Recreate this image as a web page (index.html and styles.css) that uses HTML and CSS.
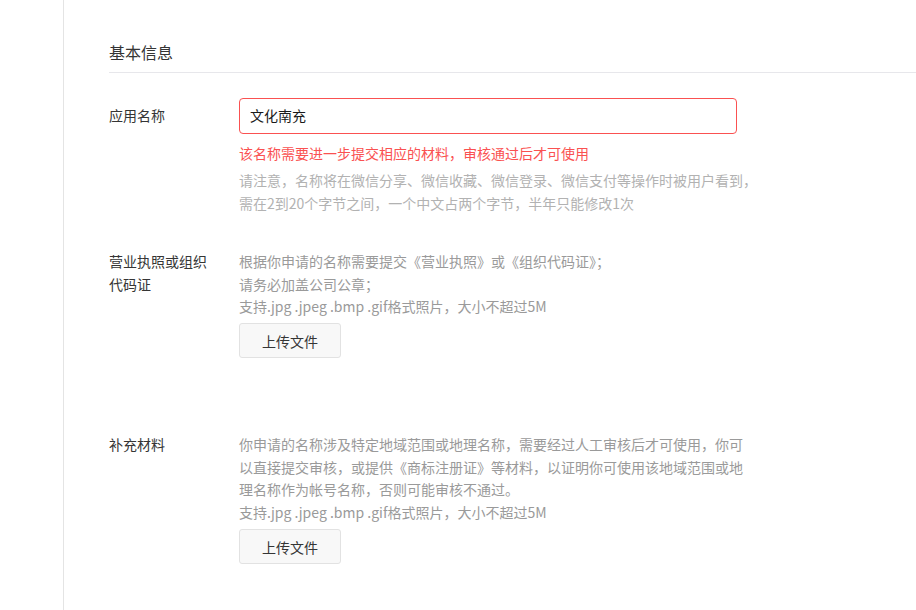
FILE: index.html
```html
<!DOCTYPE html>
<html lang="zh-CN">
<head>
<meta charset="utf-8">
<title>基本信息</title>
<link rel="stylesheet" href="styles.css">
</head>
<body>
<div class="page">
  <aside class="sidebar"></aside>
  <main class="main">
    <h2 class="section-title">基本信息</h2>

    <div class="form-row row-name">
      <label class="form-label label-input">应用名称</label>
      <div class="form-control">
        <div class="input-box">文化南充</div>
        <p class="error-msg">该名称需要进一步提交相应的材料，审核通过后才可使用</p>
        <p class="tips">请注意，名称将在微信分享、微信收藏、微信登录、微信支付等操作时被用户看到，<br>需在2到20个字节之间，一个中文占两个字节，半年只能修改1次</p>
      </div>
    </div>

    <div class="form-row row-license">
      <label class="form-label">营业执照或组织代码证</label>
      <div class="form-control">
        <p class="desc">根据你申请的名称需要提交《营业执照》或《组织代码证》；<br>请务必加盖公司公章；<br>支持.jpg .jpeg .bmp .gif格式照片，大小不超过5M</p>
        <button class="upload-btn" type="button">上传文件</button>
      </div>
    </div>

    <div class="form-row row-extra">
      <label class="form-label">补充材料</label>
      <div class="form-control">
        <p class="desc desc-wrap">你申请的名称涉及特定地域范围或地理名称，需要经过人工审核后才可使用，你可以直接提交审核，或提供《商标注册证》等材料，以证明你可使用该地域范围或地理名称作为帐号名称，否则可能审核不通过。<br>支持.jpg .jpeg .bmp .gif格式照片，大小不超过5M</p>
        <button class="upload-btn" type="button">上传文件</button>
      </div>
    </div>
  </main>
</div>
</body>
</html>
```

FILE: styles.css
```css
* {
  box-sizing: border-box;
}

html, body {
  margin: 0;
  padding: 0;
  background: #ffffff;
}

body {
  font-family: "Noto Sans CJK SC", "Noto Sans", sans-serif;
  font-size: 14px;
  color: #353535;
}

.page {
  display: flex;
  min-height: 610px;
}

.sidebar {
  width: 64px;
  flex: 0 0 64px;
  border-right: 1px solid #e4e4e4;
}

.main {
  flex: 1;
  padding: 40px 0 0 45px;
}

.section-title {
  margin: 0;
  font-size: 16px;
  font-weight: 400;
  line-height: 24px;
  padding-bottom: 8px;
  border-bottom: 1px solid #e7e7eb;
  color: #353535;
}

.form-row {
  display: flex;
}

.row-name {
  margin-top: 25px;
}

.row-license {
  margin-top: 36px;
}

.row-extra {
  margin-top: 75px;
}

.form-label {
  width: 100px;
  margin-right: 30px;
  flex: 0 0 100px;
  line-height: 22.4px;
  color: #353535;
}

.label-input {
  line-height: 34px;
}

.form-control {
  flex: 1;
}

.input-box {
  width: 498px;
  height: 36px;
  border: 1px solid #fa5151;
  border-radius: 4px;
  padding: 0 10px;
  line-height: 32px;
  color: #1a1a1a;
}

.error-msg {
  margin: 8px 0 0;
  line-height: 22.4px;
  color: #fa5151;
}

.tips {
  margin: 5px 0 0;
  line-height: 22.4px;
  color: #b2b2b2;
}

.desc {
  margin: 0;
  line-height: 22.4px;
  color: #9a9a9a;
}

.desc-wrap {
  width: 510px;
}

.upload-btn {
  display: block;
  margin-top: 6px;
  width: 102px;
  height: 35px;
  padding: 0;
  border: 1px solid #e2e2e2;
  border-radius: 3px;
  background: #f8f8f8;
  font-family: inherit;
  font-size: 14px;
  color: #353535;
}
```
